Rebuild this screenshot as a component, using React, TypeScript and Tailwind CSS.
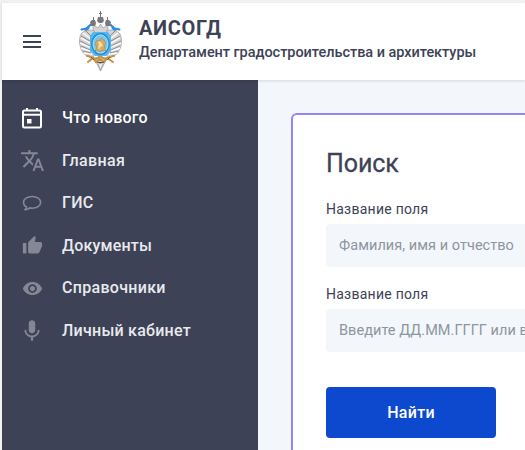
import type { ReactNode } from 'react';
import { MdTranslate, MdThumbUp, MdVisibility, MdMic } from 'react-icons/md';

function Calendar() {
  return (
    <svg width="24" height="24" viewBox="0 0 24 24" fill="none" stroke="currentColor" strokeWidth="2">
      <rect x="3" y="4.500" width="18" height="17" rx="1.500" />
      <path d="M3 8.800h18M7 2v3M17 2v3" />
      <path d="M7 13h4.500v4.500H7Z" fill="currentColor" stroke="none" />
    </svg>
  );
}

function Bubble() {
  return (
    <svg width="20" height="20" viewBox="0 0 20 20" fill="none" stroke="currentColor" strokeWidth="1.6" strokeLinejoin="round">
      <path d="M10.200 3.500C5.400 3.500 1.500 6 1.500 9.400c0 1.900 1.200 3.500 3.100 4.500-.2 1.100-.9 2-1.700 2.900 2-.2 3.700-.9 4.900-1.900.8.200 1.600.3 2.400.3 4.800 0 8.400-2.400 8.400-5.800s-3.700-5.900-8.400-5.900Z" />
    </svg>
  );
}

function Emblem() {
  return (
    <svg width="44" height="60" viewBox="0 0 44 60">
      <g fill="none" stroke="#2a8be0" strokeWidth="2.200" strokeLinejoin="round">
        <path d="M16 14c-4-2-6 1-8 3s-4 0-6 2M10 16l-4 5" />
        <path d="M27 14c4-2 6 1 8 3s4 0 6 2M33 16l4 5" />
      </g>
      <g fill="#d5d4d4" stroke="#8c8c90" strokeWidth=".6">
        <path d="M16 20C11 18 5 19 2 23c-2 4-2 10 0 15s6 8 12 8l2-3Z" />
        <path d="M27 20c5-2 11-1 14 3 2 4 2 10 0 15s-6 8-12 8l-2-3Z" />
        <path d="m16 49 5.500 11L27 49l-5.500-4Z" />
        <path d="M17 22c-3-2-4-6-2-8l4 3 2.500-4 2.500 4 4-3c2 2 1 6-2 8Z" />
      </g>
      <g fill="#77777c">
        <path d="M19 6h5l1 4-2 2h-3l-2-2ZM11 11l2-2h3l1 3-1 3h-4ZM26 12l1-3h3l2 2-1 4h-4Z" />
        <path d="M21 0h1v2h1v1h-1v4h-1V3h-1V2h1ZM14 6h1v4h-1ZM28 6h1v4h-1Z" />
      </g>
      <path d="m4 22 8 6M2 27l9 5M1 32l10 4M2 37l9 3M5 42l8 1M39 22l-8 6M41 27l-9 5M42 32l-10 4M41 37l-9 3M38 42l-8 1" stroke="#fff" strokeWidth="1.400" />
      <path d="m7 20 6 6M2 25l9 5M1 30l10 5M2 35l9 4M4 40l8 2M36 20l-6 6M41 25l-9 5M42 30l-10 5M41 35l-9 4M39 40l-8 2" stroke="#838388" strokeWidth=".9" />
      <path d="M14 21h15l3 4v15l-5 5H16l-5-5V25Z" fill="#55b7ed" />
      <ellipse cx="21.500" cy="33" rx="9.300" ry="11" fill="#198bdc" />
      <ellipse cx="21.500" cy="33" rx="7.500" ry="9.200" fill="#74c8ef" stroke="#c3ecfb" strokeWidth=".8" />
      <path d="m16 40 2-4-2-3 2-4 3 1 1-3 3 2 2 4-2 2 2 5-3-1-3 2-2-2Z" fill="#dcaa5c" stroke="#a87d3e" strokeWidth=".5" />
      <path d="m19 30 3 1 2 4-3 1-1 3-1-3 1-2Z" fill="#f8dfa3" />
      <g fill="none" stroke="#c39143" strokeWidth="2" strokeLinecap="round">
        <path d="M8 45c4 0 6 4 11 2l2-2 3 2c5 2 7-2 11-2" />
        <path d="m9 51 5-4 3 4 4-3 4 3 3-4 6 4" />
      </g>
      <path d="m12 46 3 3M31 46l-3 3M18 51l3 1 4-1" stroke="#705332" strokeWidth=".8" />
      <path d="m19 53 2.500 6 2.500-6" fill="#eee" stroke="#98989d" strokeWidth=".7" />
    </svg>
  );
}

function MenuItem({ icon, label, active = false }: { icon: ReactNode; label: ReactNode; active?: boolean }) {
  return (
    <li className={`flex h-[42.5px] items-center ${active ? 'text-white' : 'text-[#e9eaed]'}`}>
      <span className={`flex w-[60px] shrink-0 justify-center ${active ? 'text-white' : 'text-[#838894]'}`}>{icon}</span>
      {label}
    </li>
  );
}

function Field({ placeholder }: { placeholder: ReactNode }) {
  return (
    <div className="h-[85px]">
      <div className="h-[25px] text-[14px] leading-[20px] tracking-[0.25px]">Название поля</div>
      <div className="flex h-[43px] w-[300px] items-center rounded-[4px] bg-[#f3f7fc] pl-[13px] whitespace-nowrap text-[#8d959f]">
        {placeholder}
      </div>
    </div>
  );
}

export default function App() {
  return (
    <div className="flex h-[450px] w-[525px] flex-col overflow-hidden bg-[#f2f2f2] pt-[3px] pl-[2px] font-['Roboto',sans-serif] text-[#3d4256]">
      <header className="z-10 flex h-[77px] shrink-0 bg-white shadow-[0_1px_3px_rgba(0,0,0,0.13)]">
        <div className="flex w-[60px] items-center justify-center">
          <div className="flex h-[13px] w-[18px] flex-col justify-between">
            <i className="h-[2px] bg-[#3d4256]" />
            <i className="h-[2px] bg-[#3d4256]" />
            <i className="h-[2px] bg-[#3d4256]" />
          </div>
        </div>
        <div className="w-[77px] pt-[8px] pl-[17px]"><Emblem /></div>
        <div className="pt-[12px] whitespace-nowrap">
          <div className="h-[27px] text-[20px] leading-[27px] font-bold tracking-[0.65px]">АИСОГД</div>
          <div className="text-[14.500px] leading-[21px] font-medium tracking-[-0.04px]">Департамент градостроительства и архитектуры</div>
        </div>
      </header>
      <div className="flex min-h-0 flex-1">
        <nav className="w-[256px] shrink-0 bg-[#3d4256] pt-[17px] text-[16px] font-medium">
          <ul>
            <MenuItem active icon={<Calendar />} label={<span className="tracking-[0.2px]">Что нового</span>} />
            <MenuItem icon={<MdTranslate size={25} />} label={<span className="tracking-[0.4px]">Главная</span>} />
            <MenuItem icon={<Bubble />} label={<span className="tracking-[0.3px]">ГИС</span>} />
            <MenuItem icon={<MdThumbUp size={21} />} label={<span className="tracking-[0.2px]">Документы</span>} />
            <MenuItem icon={<MdVisibility size={21} />} label={<span className="tracking-[0.3px]">Справочники</span>} />
            <MenuItem icon={<MdMic size={26} />} label={<span className="tracking-[0.25px]">Личный кабинет</span>} />
          </ul>
        </nav>
        <main className="flex-1 overflow-hidden bg-[#f3f7fc] pt-[33px] pl-[33px]">
          <section className="h-[360px] w-[400px] rounded-[6px] border-2 border-[#9284fa] bg-white pt-[31px] pl-[33px]">
            <h1 className="h-[53px] text-[25px] leading-[36px] tracking-[-0.1px] [-webkit-text-stroke:0.3px_#3d4256]">Поиск</h1>
            <Field placeholder={<span className="text-[14.500px] tracking-[0.05px]">Фамилия, имя и отчество</span>} />
            <Field placeholder={<span className="text-[14.500px] tracking-[0.05px]">Введите ДД.ММ.ГГГГ или в</span>} />
            <button className="mt-[18px] h-[51px] w-[170px] rounded-[4px] bg-[#0d49ce] text-[16px] font-medium tracking-[0.3px] text-white">Найти</button>
          </section>
        </main>
      </div>
    </div>
  );
}
